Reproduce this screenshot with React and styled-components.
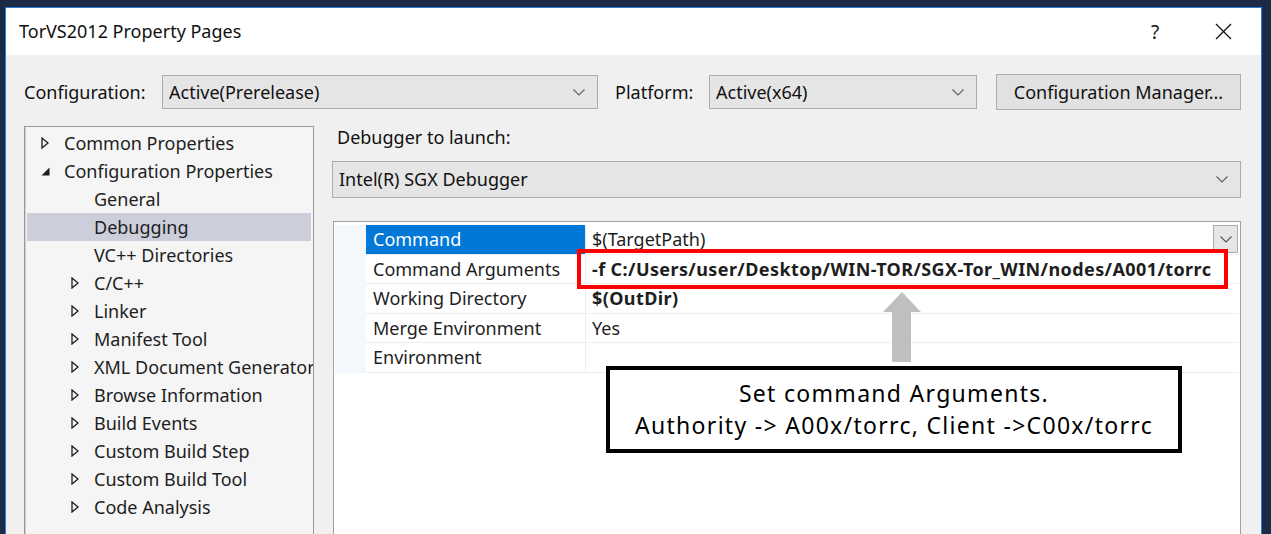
import React from 'react';
import styled, { createGlobalStyle } from 'styled-components';

const GlobalStyle = createGlobalStyle`
  html, body { margin: 0; padding: 0; background: #1d2a45; }
  body { font-family: "Noto Sans", "Liberation Sans", sans-serif; overflow: hidden; color: #1a1a1a; }
  * { box-sizing: border-box; }
`;

const Screen = styled.div`
  width: 1271px;
  height: 534px;
  padding: 7px 9px 0 5px;
  background: #1d2a45;
  overflow: hidden;
`;

const Window = styled.div`
  height: 560px;
  border: 1px solid #2a7ad4;
  border-bottom: none;
  background: #f0f0f0;
  display: flex;
  flex-direction: column;
`;

const TitleBar = styled.div`
  height: 47px;
  background: #ffffff;
  display: flex;
  align-items: center;
  padding-left: 13px;
  flex-shrink: 0;
`;

const Title = styled.div`
  flex: 1;
  font-size: 18px;
  color: #111;
  padding-bottom: 2px;
`;

const TitleButton = styled.div`
  width: ${p => p.$w}px;
  height: 46px;
  display: flex;
  align-items: center;
  justify-content: center;
  font-size: 19px;
  color: #111;
`;

const Body = styled.div`
  flex: 1;
  display: flex;
  flex-direction: column;
  padding: 19px 20px 0 18px;
`;

const ConfigRow = styled.div`
  display: flex;
  align-items: center;
  height: 36px;
`;

const Label = styled.div`
  width: ${p => p.$w}px;
  margin-left: ${p => p.$ml || 0}px;
  font-size: 18px;
  line-height: 22px;
  color: #111;
  white-space: nowrap;
`;

const Select = styled.div`
  width: ${p => (p.$w ? `${p.$w}px` : 'auto')};
  height: ${p => p.$h}px;
  margin-top: ${p => p.$mt || 0}px;
  background: #e5e5e5;
  border: 1px solid #acacac;
  display: flex;
  align-items: center;
  padding: 0 12px 0 6px;
  font-size: 18px;
  color: #111;
`;

const SelectText = styled.span`
  flex: 1;
  white-space: nowrap;
  padding-bottom: 1px;
`;

const Button = styled.div`
  width: 245px;
  height: 36px;
  margin-left: 19px;
  background: #e1e1e1;
  border: 1px solid #adadad;
  display: flex;
  align-items: center;
  justify-content: center;
  font-size: 18px;
  color: #111;
  padding-bottom: 1px;
`;

const Main = styled.div`
  display: flex;
  gap: 18px;
  margin-top: 16px;
  flex: 1;
`;

const Tree = styled.div`
  width: 290px;
  height: 430px;
  background: #f5f5f5;
  border: 1px solid #999;
  box-shadow: inset 1px 0 0 #d0d0d0;
  padding: 2px 2px 0 2px;
  overflow: hidden;
`;

const TreeRow = styled.div`
  height: 28px;
  display: flex;
  align-items: center;
  padding-left: ${p => 14 + p.$level * 30}px;
  background: ${p => (p.$selected ? '#cccedb' : 'transparent')};
  font-size: 18px;
  color: #1e1e1e;
  white-space: nowrap;
`;

const Toggle = styled.span`
  width: 23px;
  flex-shrink: 0;
  display: flex;
  align-items: center;
`;

const Right = styled.div`
  flex: 1;
  display: flex;
  flex-direction: column;
`;

const SectionLabel = styled.div`
  font-size: 18px;
  line-height: 22px;
  margin-left: 5px;
  color: #111;
`;

const Grid = styled.div`
  position: relative;
  margin-top: 23px;
  margin-left: 1px;
  height: 330px;
  background: #ffffff;
  border: 1px solid #a0a0a0;
  padding: 3px 1px 0 1px;
`;

const PropRow = styled.div`
  display: grid;
  grid-template-columns: 31px 220px 1fr;
  height: 29.5px;
`;

const Gutter = styled.div`
  background: #f4f7fc;
`;

const NameCell = styled.div`
  display: flex;
  align-items: center;
  padding-left: 7px;
  font-size: 18px;
  color: ${p => (p.$selected ? '#ffffff' : '#1e1e1e')};
  background: ${p => (p.$selected ? '#0078d7' : '#ffffff')};
  border-bottom: 1px solid #eeeeee;
  border-right: 1px solid #eeeeee;
  white-space: nowrap;
`;

const ValueCell = styled.div`
  display: flex;
  align-items: center;
  padding-left: 6px;
  font-size: 18px;
  font-weight: ${p => (p.$bold ? 700 : 400)};
  letter-spacing: ${p => (p.$bold ? '0.4px' : '0')};
  color: #1e1e1e;
  border-bottom: 1px solid #eeeeee;
  white-space: nowrap;
  overflow: hidden;
`;

const ValueText = styled.span`
  flex: 1;
`;

const DropButton = styled.div`
  width: 25px;
  height: 28px;
  margin-right: 1px;
  background: #e6e6e6;
  border: 1px solid #adadad;
  display: flex;
  align-items: center;
  justify-content: center;
`;

const RedBox = styled.div`
  position: absolute;
  left: 243px;
  top: 27px;
  width: 651px;
  height: 40px;
  border: 4px solid #ff0000;
`;

const Arrow = styled.svg`
  position: absolute;
  left: 548px;
  top: 70px;
`;

const Callout = styled.div`
  position: absolute;
  left: 272px;
  top: 144px;
  width: 576px;
  height: 87px;
  border: 4px solid #000000;
  background: #ffffff;
  display: flex;
  flex-direction: column;
  align-items: center;
  justify-content: center;
  font-family: "Noto Sans", sans-serif;
  font-size: 23px;
  line-height: 31.5px;
  letter-spacing: 1.3px;
  color: #000;
`;

const Chevron = ({ color = '#606060' }) => (
  <svg width="12" height="7" viewBox="0 0 12 7">
    <polyline points="0.5,0.5 6,6 11.5,0.5" fill="none" stroke={color} strokeWidth="1.1" />
  </svg>
);

const Collapsed = () => (
  <svg width="8" height="12" viewBox="0 0 8 12">
    <polygon points="1,1 7,6 1,11" fill="none" stroke="#1e1e1e" strokeWidth="1.3" />
  </svg>
);

const Expanded = () => (
  <svg width="9" height="9" viewBox="0 0 9 9">
    <polygon points="8.5,0.5 8.5,8.5 0.5,8.5" fill="#1e1e1e" />
  </svg>
);

const CloseIcon = () => (
  <svg width="17" height="17" viewBox="0 0 17 17">
    <line x1="1" y1="1" x2="16" y2="16" stroke="#111" strokeWidth="1.3" />
    <line x1="16" y1="1" x2="1" y2="16" stroke="#111" strokeWidth="1.3" />
  </svg>
);

const treeItems = [
  { label: 'Common Properties', level: 0, toggle: 'collapsed' },
  { label: 'Configuration Properties', level: 0, toggle: 'expanded' },
  { label: 'General', level: 1 },
  { label: 'Debugging', level: 1, selected: true },
  { label: 'VC++ Directories', level: 1 },
  { label: 'C/C++', level: 1, toggle: 'collapsed' },
  { label: 'Linker', level: 1, toggle: 'collapsed' },
  { label: 'Manifest Tool', level: 1, toggle: 'collapsed' },
  { label: 'XML Document Generator', level: 1, toggle: 'collapsed' },
  { label: 'Browse Information', level: 1, toggle: 'collapsed' },
  { label: 'Build Events', level: 1, toggle: 'collapsed' },
  { label: 'Custom Build Step', level: 1, toggle: 'collapsed' },
  { label: 'Custom Build Tool', level: 1, toggle: 'collapsed' },
  { label: 'Code Analysis', level: 1, toggle: 'collapsed' },
];

const props = [
  { name: 'Command', value: '$(TargetPath)', selected: true, drop: true },
  { name: 'Command Arguments', value: '-f C:/Users/user/Desktop/WIN-TOR/SGX-Tor_WIN/nodes/A001/torrc', bold: true },
  { name: 'Working Directory', value: '$(OutDir)', bold: true },
  { name: 'Merge Environment', value: 'Yes' },
  { name: 'Environment', value: '' },
];

export default function App() {
  return (
    <>
      <GlobalStyle />
      <Screen>
        <Window>
          <TitleBar>
            <Title>TorVS2012 Property Pages</Title>
            <TitleButton $w={60}>?</TitleButton>
            <TitleButton $w={76}><CloseIcon /></TitleButton>
          </TitleBar>
          <Body>
            <ConfigRow>
              <Label $w={138}>Configuration:</Label>
              <Select $w={436} $h={34}>
                <SelectText>Active(Prerelease)</SelectText>
                <Chevron />
              </Select>
              <Label $w={94} $ml={17}>Platform:</Label>
              <Select $w={268} $h={34}>
                <SelectText>Active(x64)</SelectText>
                <Chevron />
              </Select>
              <Button>Configuration Manager...</Button>
            </ConfigRow>
            <Main>
              <Tree>
                {treeItems.map(item => (
                  <TreeRow key={item.label} $level={item.level} $selected={item.selected}>
                    <Toggle>
                      {item.toggle === 'collapsed' && <Collapsed />}
                      {item.toggle === 'expanded' && <Expanded />}
                    </Toggle>
                    {item.label}
                  </TreeRow>
                ))}
              </Tree>
              <Right>
                <SectionLabel>Debugger to launch:</SectionLabel>
                <Select $h={37} $mt={13}>
                  <SelectText>Intel(R) SGX Debugger</SelectText>
                  <Chevron />
                </Select>
                <Grid>
                  {props.map(p => (
                    <PropRow key={p.name}>
                      <Gutter />
                      <NameCell $selected={p.selected}>{p.name}</NameCell>
                      <ValueCell $bold={p.bold}>
                        <ValueText>{p.value}</ValueText>
                        {p.drop && (
                          <DropButton>
                            <Chevron color="#555" />
                          </DropButton>
                        )}
                      </ValueCell>
                    </PropRow>
                  ))}
                  <RedBox />
                  <Arrow width="40" height="70" viewBox="0 0 40 70">
                    <polygon points="20,0 39,20 29,20 29,70 10,70 10,20 1,20" fill="#bfbfbf" />
                  </Arrow>
                  <Callout>
                    <div>Set command Arguments.</div>
                    <div>Authority -&gt; A00x/torrc, Client -&gt;C00x/torrc</div>
                  </Callout>
                </Grid>
              </Right>
            </Main>
          </Body>
        </Window>
      </Screen>
    </>
  );
}
